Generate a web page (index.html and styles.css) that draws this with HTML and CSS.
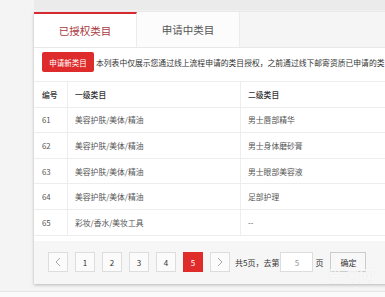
FILE: index.html
```html
<!DOCTYPE html>
<html>
<head>
<meta charset="UTF-8">
<title>类目管理</title>
<link rel="stylesheet" href="styles.css">
</head>
<body>
<div class="top-strip"></div>
<div class="card">
  <div class="tabs">
    <div class="tab active">已授权类目</div>
    <div class="tab">申请中类目</div>
  </div>
  <div class="toolbar">
    <button class="btn-red">申请新类目</button>
    <span class="tip">本列表中仅展示您通过线上流程申请的类目授权，之前通过线下邮寄资质已申请的类目</span>
  </div>
  <table class="list">
    <tr class="head"><td class="c1">编号</td><td class="c2">一级类目</td><td>二级类目</td></tr>
    <tr><td class="c1">61</td><td class="c2">美容护肤/美体/精油</td><td>男士唇部精华</td></tr>
    <tr><td class="c1">62</td><td class="c2">美容护肤/美体/精油</td><td>男士身体磨砂膏</td></tr>
    <tr><td class="c1">63</td><td class="c2">美容护肤/美体/精油</td><td>男士眼部美容液</td></tr>
    <tr><td class="c1">64</td><td class="c2">美容护肤/美体/精油</td><td>足部护理</td></tr>
    <tr><td class="c1">65</td><td class="c2">彩妆/香水/美妆工具</td><td>--</td></tr>
  </table>
  <div class="pager">
    <span class="pg"><svg width="6" height="10" viewBox="0 0 6 10"><polyline points="5,1 1,5 5,9" fill="none" stroke="#aaa" stroke-width="1"/></svg></span>
    <span class="pg">1</span>
    <span class="pg">2</span>
    <span class="pg">3</span>
    <span class="pg">4</span>
    <span class="pg on">5</span>
    <span class="pg"><svg width="6" height="10" viewBox="0 0 6 10"><polyline points="1,1 5,5 1,9" fill="none" stroke="#aaa" stroke-width="1"/></svg></span>
    <span class="total">共5页，去第</span>
    <span class="goto">5</span>
    <span class="unit">页</span>
    <span class="ok">确定</span>
  </div>
</div>
<div class="next-strip"></div>
<div class="mark">爱淘网</div>
</body>
</html>
```
FILE: styles.css
```css
body {
  margin: 0;
  background: #f4f4f4;
  font-family: "Noto Sans CJK SC", "Noto Sans", sans-serif;
  overflow: hidden;
  width: 385px;
  height: 297px;
  position: relative;
}

.top-strip {
  height: 10px;
  margin-left: 34px;
  background: #ebebeb;
}

.card {
  margin: 2px 0 0 34px;
  width: 380px;
  background: #fff;
  box-shadow: 0 1px 3px rgba(0,0,0,.25);
}

.tabs {
  display: flex;
  height: 35px;
  background: #f5f5f5;
  border-bottom: 1px solid #e8e8e8;
}
.tab {
  width: 103px;
  display: flex;
  align-items: center;
  justify-content: center;
  font-size: 10.5px;
  color: #555;
  background: #fcfcfc;
  border-right: 1px solid #ececec;
  box-sizing: border-box;
}
.tab.active {
  border-top: 2px solid #d42a30;
  color: #a83a3e;
  background: #fff;
}

.toolbar {
  display: flex;
  align-items: center;
  gap: 2px;
  padding: 4px 0 0 8px;
  white-space: nowrap;
}
.btn-red {
  width: 52px;
  height: 20px;
  border: 0;
  border-radius: 2px;
  background: #de2c2c;
  color: #fff;
  font-family: inherit;
  font-size: 7.5px;
  padding: 0;
}
.tip {
  font-size: 7.8px;
  color: #333;
}

.list {
  margin-top: 9px;
  width: 100%;
  border-collapse: collapse;
  font-size: 7.8px;
  color: #555;
}
.list td {
  height: 24.6px;
  padding: 0 0 0 7px;
  border-top: 1px solid #ededed;
  border-bottom: 1px solid #ededed;
  border-left: 1px solid #ededed;
}
.list td.c1 {
  width: 25px;
  padding-left: 8px;
  border-left: 0;
}
.list td.c2 { width: 165px; }
.list .head td {
  color: #333;
  font-weight: 500;
}

.pager {
  margin-top: 5px;
  height: 43px;
  background: #f6f6f6;
  display: flex;
  align-items: center;
  padding-left: 14px;
  font-size: 8px;
  color: #333;
}
.pg {
  width: 20px;
  height: 20px;
  box-sizing: border-box;
  border: 1px solid #ddd;
  background: #fbfbfb;
  display: flex;
  align-items: center;
  justify-content: center;
  margin-right: 7px;
}
.pg.on {
  background: #e02b2b;
  border-color: #e02b2b;
  color: #fff;
}
.total { margin-left: -2px; }
.goto {
  width: 33px;
  height: 20px;
  box-sizing: border-box;
  border: 1px solid #ddd;
  background: #fff;
  color: #999;
  display: flex;
  align-items: center;
  justify-content: center;
  margin-left: 1px;
}
.unit { margin-left: 2px; }
.ok {
  width: 36px;
  height: 20px;
  box-sizing: border-box;
  border: 1px solid #ccc;
  background: #f8f8f8;
  display: flex;
  align-items: center;
  justify-content: center;
  margin-left: 7px;
}

.next-strip {
  margin: 7px 0 0 0;
  height: 10px;
  background: #fafafa;
  border-top: 1px solid #e6e6e6;
}

.mark {
  position: absolute;
  right: 10px;
  bottom: 10px;
  font-size: 16px;
  font-weight: bold;
  color: rgba(255,255,255,.75);
  text-shadow: 0 0 1px rgba(0,0,0,.08);
}
```
